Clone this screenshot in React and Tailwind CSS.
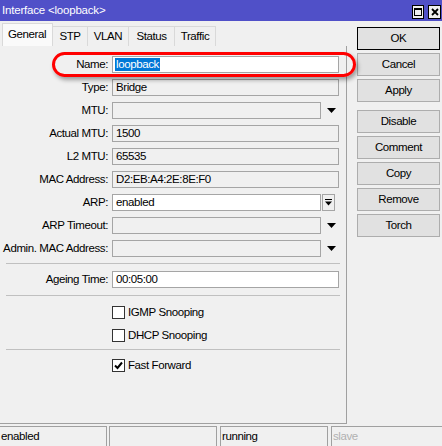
import React from 'react';

const rows = [
  { label: 'Name:', value: 'loopback', white: true, selected: true },
  { label: 'Type:', value: 'Bridge' },
  { label: 'MTU:', value: '', arrow: 'tri' },
  { label: 'Actual MTU:', value: '1500' },
  { label: 'L2 MTU:', value: '65535' },
  { label: 'MAC Address:', value: 'D2:EB:A4:2E:8E:F0' },
  { label: 'ARP:', value: 'enabled', white: true, arrow: 'btn' },
  { label: 'ARP Timeout:', value: '', arrow: 'tri' },
  { label: 'Admin. MAC Address:', value: '', arrow: 'tri' },
];

const buttons = [
  { label: 'OK', def: true },
  { label: 'Cancel' },
  { label: 'Apply' },
  { label: 'Disable', gap: true },
  { label: 'Comment' },
  { label: 'Copy' },
  { label: 'Remove' },
  { label: 'Torch' },
];

function Triangle() {
  return (
    <svg width="9" height="5" viewBox="0 0 9 5">
      <polygon points="0,0 9,0 4.5,5" fill="#000" />
    </svg>
  );
}

function Field({ row }) {
  const hasArrow = !!row.arrow;
  return (
    <div className="flex h-[17px] items-center">
      <div className="w-[108px] text-right whitespace-nowrap">{row.label}</div>
      <div
        className={`ml-[4px] h-[17px] border border-[#a5a5a5] flex items-center pl-[2px] ${
          hasArrow ? 'w-[209px]' : 'w-[227px]'
        } ${row.white ? 'bg-white' : 'bg-[#f0f0f0]'}`}
      >
        {row.selected ? (
          <span className="bg-[#0078d7] text-white px-[1px] leading-[13px]">{row.value}</span>
        ) : (
          <span className="pl-[1px]">{row.value}</span>
        )}
      </div>
      {row.arrow === 'tri' && (
        <div className="w-[18px] h-[17px] flex items-center pl-[6px]">
          <Triangle />
        </div>
      )}
      {row.arrow === 'btn' && (
        <div className="ml-[1px] w-[13px] h-[17px] border border-[#a5a5a5] bg-[#f0f0f0] flex items-center justify-center">
          <svg width="7" height="7" viewBox="0 0 7 7">
            <rect x="0" y="0" width="7" height="1" fill="#000" />
            <polygon points="0,2.5 7,2.5 3.5,6.5" fill="#000" />
          </svg>
        </div>
      )}
    </div>
  );
}

function Check({ label, checked, className }) {
  return (
    <div className={`flex h-[17px] items-center pl-[112px] ${className}`}>
      <div className="w-[13px] h-[13px] border border-[#333] bg-white flex items-center justify-center">
        {checked && (
          <svg width="9" height="9" viewBox="0 0 9 9">
            <polyline points="1,4.5 3.5,7 8,1.5" fill="none" stroke="#000" strokeWidth="2" />
          </svg>
        )}
      </div>
      <span className="ml-[3px]">{label}</span>
    </div>
  );
}

export default function App() {
  return (
    <div
      className="relative w-[442px] h-[446px] overflow-hidden bg-[#f0f0f0] text-[11.5px] tracking-[-0.4px] text-black"
      style={{ fontFamily: '"Liberation Sans", Arial, sans-serif' }}
    >
      {/* Title bar */}
      <div className="h-[21px] bg-[#5050c8] flex items-center justify-between pl-[2px] pr-[1px]">
        <span className="text-white text-[11.5px] tracking-[-0.2px]">Interface &lt;loopback&gt;</span>
        <div className="flex gap-[4px] mt-[2px]">
          <div className="w-[12px] h-[14px] border border-black bg-[#f0f0f0] flex items-center justify-center">
            <svg width="8" height="8" viewBox="0 0 8 8">
              <rect x="0.5" y="0.5" width="7" height="7" fill="none" stroke="#000" />
              <rect x="0" y="0" width="8" height="2" fill="#000" />
            </svg>
          </div>
          <div className="w-[13px] h-[14px] border border-black bg-[#f0f0f0] flex items-center justify-center">
            <svg width="8" height="8" viewBox="0 0 8 8">
              <path d="M1 1 L7 7 M7 1 L1 7" stroke="#000" strokeWidth="1.8" />
            </svg>
          </div>
        </div>
      </div>

      <div className="flex h-[403px]">
        {/* Left: tabs + panel */}
        <div className="w-[347px] flex flex-col">
          <div className="h-[25px] flex items-end pl-[2px]">
            <div className="w-[51px] h-[23px] border border-b-0 border-[#d9d9d9] bg-[#fafafa] flex items-center pl-[5px] pb-[1px]">
              General
            </div>
            <div className="w-[35px] h-[20px] border border-l-0 border-b-0 border-[#d9d9d9] flex items-center justify-center">
              STP
            </div>
            <div className="w-[41px] h-[20px] border border-l-0 border-b-0 border-[#d9d9d9] flex items-center justify-center">
              VLAN
            </div>
            <div className="w-[46px] h-[20px] border border-l-0 border-b-0 border-[#d9d9d9] flex items-center justify-center">
              Status
            </div>
            <div className="w-[41px] h-[20px] border border-l-0 border-b-0 border-[#d9d9d9] flex items-center justify-center">
              Traffic
            </div>
          </div>

          <div className="h-[378px] border-r border-b border-[#a0a0a0] pt-[10px] flex flex-col">
            <div className="flex flex-col gap-[6px]">
              {rows.map((r) => (
                <Field key={r.label} row={r} />
              ))}
            </div>
            <div className="mt-[6px] ml-[6px] w-[334px] h-px bg-[#c0c0c0]" />
            <div className="mt-[7px]">
              <Field row={{ label: 'Ageing Time:', value: '00:05:00', white: true }} />
            </div>
            <div className="mt-[7px] ml-[6px] w-[334px] h-px bg-[#c0c0c0]" />
            <Check label="IGMP Snooping" className="mt-[8px]" />
            <Check label="DHCP Snooping" className="mt-[6px]" />
            <div className="mt-[5px] ml-[6px] w-[334px] h-px bg-[#c0c0c0]" />
            <Check label="Fast Forward" checked className="mt-[7px]" />
          </div>
        </div>

        {/* Right: buttons */}
        <div className="flex flex-col gap-[3px] pl-[10px] pt-[6px]">
          {buttons.map((b) => (
            <button
              key={b.label}
              className={`w-[83px] h-[23px] bg-[#e1e1e1] flex items-center justify-center ${
                b.def ? 'border border-black' : 'border border-[#adadad]'
              } ${b.gap ? 'mt-[5px]' : ''}`}
            >
              {b.label}
            </button>
          ))}
        </div>
      </div>

      {/* Status bar */}
      <div className="mt-[2px] h-[20px] flex">
        <div className="w-[107px] border-t border-r border-[#a0a0a0] flex items-center pl-[1px]">enabled</div>
        <div className="ml-[2px] w-[108px] border-t border-x border-[#a0a0a0]" />
        <div className="ml-[3px] w-[108px] border-t border-x border-[#a0a0a0] flex items-center pl-[1px]">running</div>
        <div className="ml-[3px] flex-1 border-t border-l border-[#a0a0a0] flex items-center pl-[1px] text-[#b0b0b0]">
          slave
        </div>
      </div>

      {/* Highlight ring */}
      <div className="absolute left-[52px] top-[52px] w-[304px] h-[25px] border-[3px] border-[#ff0000] rounded-full shadow-[2px_3px_4px_rgba(0,0,0,0.35)]" />
    </div>
  );
}
